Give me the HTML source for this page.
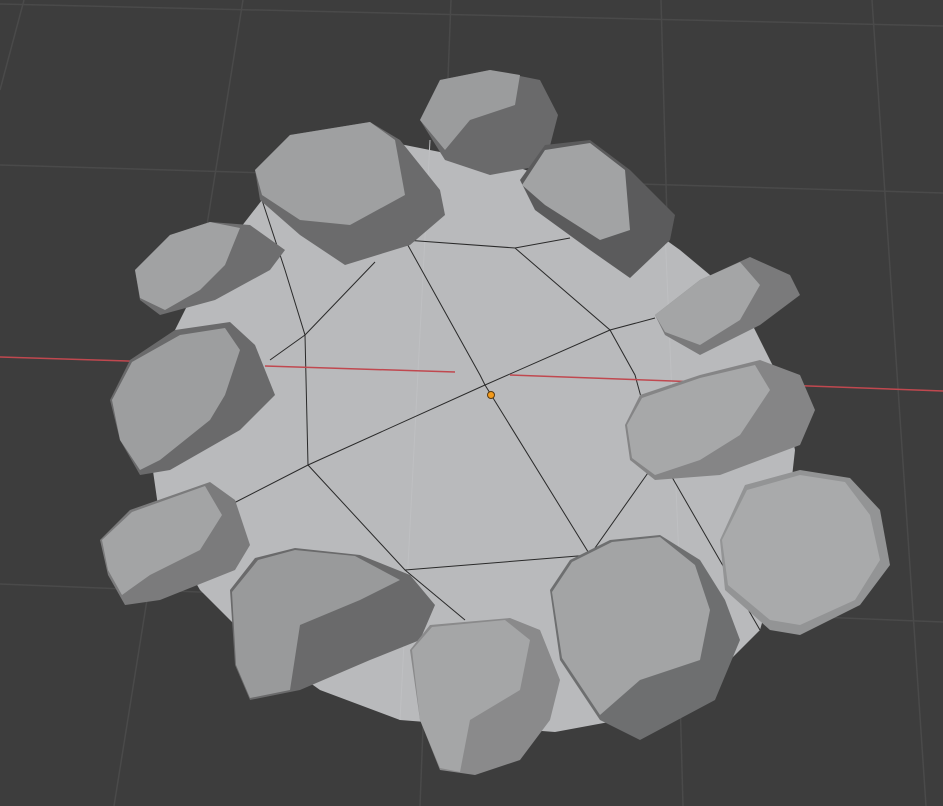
<!DOCTYPE html>
<html><head><meta charset="utf-8"><style>html,body{margin:0;padding:0;background:#3d3d3d;overflow:hidden}svg{display:block}</style></head>
<body>
<svg width="943" height="806" viewBox="0 0 943 806" xmlns="http://www.w3.org/2000/svg">
<rect width="943" height="806" fill="#3d3d3d"/>
<g stroke="#4a4a4a" stroke-width="1.5" fill="none">
<line x1="0" y1="4" x2="943" y2="26"/>
<line x1="0" y1="165" x2="943" y2="193"/>
<line x1="0" y1="584" x2="943" y2="622"/>
<line x1="243" y1="0" x2="114" y2="806"/>
<line x1="451" y1="0" x2="420" y2="806"/>
<line x1="661" y1="0" x2="683" y2="806"/>
<line x1="872" y1="0" x2="926" y2="806"/>
<line x1="24" y1="0" x2="0" y2="90"/>
</g>
<polygon points="262,200 380,140 520,168 610,200 680,250 740,300 780,380 795,450 785,540 760,630 700,690 620,720 555,732 400,720 320,690 250,640 200,590 160,520 150,450 160,360 200,280" fill="#b9babc"/>
<g stroke="#bfc0c2" stroke-width="1" fill="none">
<line x1="430" y1="140" x2="400" y2="720"/>
<line x1="665" y1="230" x2="685" y2="700"/>
</g>
<g stroke="#2a2a2a" stroke-width="1" fill="none">
<polyline points="262,200 285,270 305,335 308,465 405,570 465,620"/>
<polyline points="405,240 515,248 570,238"/>
<polyline points="405,240 480,375 485,385 590,555 610,600"/>
<polyline points="515,248 610,330 635,375 650,430"/>
<polyline points="485,385 610,330 655,318"/>
<polyline points="485,385 308,465 230,505"/>
<polyline points="305,335 270,360"/>
<polyline points="305,335 375,262"/>
<polyline points="405,570 590,555 650,470"/>
<polyline points="665,465 760,630"/>
</g>
<g stroke="#c0484f" stroke-width="1.5">
<line x1="0" y1="357" x2="160" y2="362"/>
<line x1="265" y1="366" x2="455" y2="372"/>
<line x1="510" y1="375" x2="943" y2="391"/>
</g>
<circle cx="491" cy="395" r="3.5" fill="#f29a1c" stroke="#5a3a10" stroke-width="1"/>
<g stroke="none">
<polygon points="420,120 440,80 490,70 540,80 558,115 545,165 490,175 445,160" fill="#6a6a6b"/>
<polygon points="420,120 440,80 490,70 520,75 515,105 470,120 445,150" fill="#9b9c9d"/>
<polygon points="255,170 290,135 370,122 400,140 440,190 445,215 410,245 345,265 300,235 260,200" fill="#6b6b6c"/>
<polygon points="255,170 290,135 370,122 395,140 405,195 350,225 300,220 262,195" fill="#9fa0a1"/>
<polygon points="520,180 545,145 590,140 630,170 675,215 670,240 630,278 590,250 535,210" fill="#5b5b5c"/>
<polygon points="522,185 545,150 590,143 625,170 630,230 600,240 545,205" fill="#a2a3a4"/>
<polygon points="135,270 170,235 210,222 250,225 285,250 270,270 215,300 160,315 140,300" fill="#6e6e6f"/>
<polygon points="135,270 170,235 210,222 240,228 225,265 200,290 165,310 140,298" fill="#a1a2a3"/>
<polygon points="655,315 700,280 750,257 790,275 800,295 760,325 700,355 665,335" fill="#7a7a7b"/>
<polygon points="655,315 700,280 740,262 760,285 740,320 700,345 665,332" fill="#a4a5a6"/>
<polygon points="110,400 130,360 175,330 230,322 255,345 275,395 240,430 170,470 140,475 120,440" fill="#6a6a6b"/>
<polygon points="112,400 132,362 180,335 225,328 240,350 225,395 210,420 160,460 140,470 120,440" fill="#9d9e9f"/>
<polygon points="625,425 640,395 700,375 760,360 800,375 815,410 800,445 720,475 655,480 630,460" fill="#858586"/>
<polygon points="627,425 642,398 700,378 755,365 770,390 740,435 700,460 655,475 632,458" fill="#a7a8a9"/>
<polygon points="100,540 130,510 210,482 235,500 250,545 235,570 160,600 125,605 108,575" fill="#7b7b7c"/>
<polygon points="102,540 132,512 205,486 222,515 200,550 150,575 122,595 108,570" fill="#a3a4a5"/>
<polygon points="720,540 745,485 800,470 850,478 880,510 890,565 860,605 800,635 770,630 725,590" fill="#939495"/>
<polygon points="722,540 747,490 800,475 845,482 870,515 880,560 855,600 800,625 770,620 728,585" fill="#a9aaab"/>
<polygon points="230,590 255,558 295,548 360,555 410,575 435,605 420,640 370,660 300,690 250,700 235,665" fill="#6a6a6b"/>
<polygon points="232,592 258,560 295,550 355,556 400,580 360,600 300,625 290,690 250,698 236,665" fill="#999a9b"/>
<polygon points="410,650 430,625 510,618 540,630 560,680 550,720 520,760 475,775 440,770 420,720" fill="#8a8a8b"/>
<polygon points="412,650 432,627 505,620 530,640 520,690 470,720 460,772 440,768 420,720" fill="#a5a6a7"/>
<polygon points="550,590 570,560 610,540 660,535 700,560 725,600 740,640 715,700 640,740 600,720 560,660" fill="#6e6f70"/>
<polygon points="552,592 572,562 612,542 660,537 695,565 710,610 700,660 640,680 600,715 562,658" fill="#a3a4a5"/>
</g>
</svg>
</body></html>
